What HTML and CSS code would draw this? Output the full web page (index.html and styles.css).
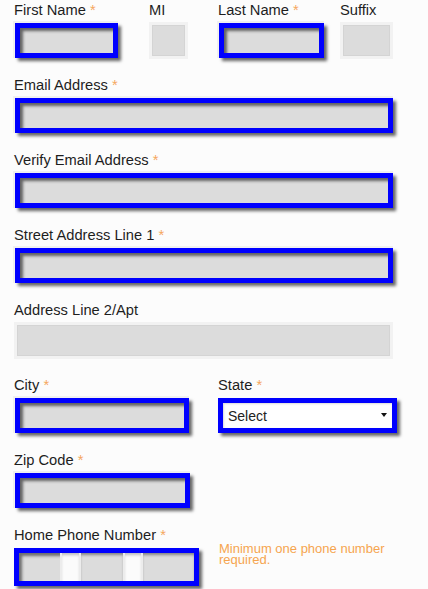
FILE: index.html
```html
<!DOCTYPE html>
<html>
	<head>
		<meta charset="UTF-8">
		<title>Contact Information</title>
		<link rel="stylesheet" href="styles.css">
	</head>
	<body>
		<form class="form">
			<div class="row">
				<div class="field f-first">
					<label>First Name <span class="req">*</span></label>
					<input type="text" class="box required">
				</div>
				<div class="field f-mi">
					<label>MI</label>
					<input type="text" class="box">
				</div>
				<div class="field f-last">
					<label>Last Name <span class="req">*</span></label>
					<input type="text" class="box required">
				</div>
				<div class="field f-suffix">
					<label>Suffix</label>
					<input type="text" class="box">
				</div>
			</div>
			<div class="field">
				<label>Email Address <span class="req">*</span></label>
				<input type="text" class="box required wide">
			</div>
			<div class="field">
				<label>Verify Email Address <span class="req">*</span></label>
				<input type="text" class="box required wide">
			</div>
			<div class="field">
				<label>Street Address Line 1 <span class="req">*</span></label>
				<input type="text" class="box required wide">
			</div>
			<div class="field">
				<label>Address Line 2/Apt</label>
				<input type="text" class="box full">
			</div>
			<div class="row">
				<div class="field f-city">
					<label>City <span class="req">*</span></label>
					<input type="text" class="box required">
				</div>
				<div class="field f-state">
					<label>State <span class="req">*</span></label>
					<div class="select">
						<select>
							<option>Select</option>
						</select>
					</div>
				</div>
			</div>
			<div class="field f-zip">
				<label>Zip Code <span class="req">*</span></label>
				<input type="text" class="box required">
			</div>
			<div class="row">
				<div class="field f-phone">
					<label>Home Phone Number <span class="req">*</span></label>
					<div class="phone">
						<input type="text" class="seg seg-area">
						<span class="sep"></span>
						<input type="text" class="seg seg-pre">
						<span class="sep"></span>
						<input type="text" class="seg seg-line">
					</div>
				</div>
				<p class="note">Minimum one phone number required.</p>
			</div>
		</form>
	</body>
</html>
```

FILE: styles.css
```css
body{
	margin: 0;
	background: #fcfcfc;
	font-family: "Liberation Sans", Arial, sans-serif;
	color: #1e1e1e;
}
.form{
	padding: 2px 14px 0;
}
.row{
	display: flex;
	align-items: flex-start;
}
.field{
	padding-bottom: 18px;
}
.field label{
	display: block;
	font-size: 14.7px;
	line-height: 17px;
	margin-bottom: 3px;
}
.req{
	color: #f5a75e;
}

/* inputs */
.box{
	display: block;
	box-sizing: border-box;
	height: 37px;
	margin: 0;
	padding: 0 6px;
	border: 3px solid #f2f2f2;
	background: #dcdcdc;
	box-shadow: inset 0 0 0 1px #d4d4d4;
	font: inherit;
	outline: none;
}
.box.required{
	height: 35px;
	margin: 4px 0 1px 1px;
	border: 5px solid #0000ff;
	box-shadow: -1px -1px 0 1px #f0f0f0, 3px 3px 3px rgba(0,0,0,.6), inset 3px 3px 3px rgba(0,0,0,.55);
}
.wide{
	width: 378px;
}
.full{
	width: 379px;
}

/* first row */
.f-first{
	width: 135px;
}
.f-first .box{
	width: 103px;
}
.f-mi{
	width: 69px;
}
.f-mi .box{
	width: 39px;
}
.f-last{
	width: 122px;
}
.f-last .box{
	width: 105px;
}
.f-suffix{
	width: 53px;
}
.f-suffix .box{
	width: 53px;
}

/* city / state */
.f-city{
	width: 204px;
}
.f-city .box{
	width: 174px;
}
.f-state{
	width: 180px;
}
.select{
	position: relative;
	margin: 4px 0 1px;
	width: 179px;
}
.select select{
	display: block;
	box-sizing: border-box;
	width: 100%;
	height: 35px;
	margin: 0;
	padding: 0 5px;
	border: 5px solid #0000ff;
	border-radius: 0;
	background: #fff;
	box-shadow: 3px 3px 3px rgba(0,0,0,.6), inset 1px 1px 2px rgba(0,0,0,.15);
	font-family: "Liberation Sans", Arial, sans-serif;
	font-size: 14px;
	color: #222;
	-webkit-appearance: none;
	appearance: none;
	outline: none;
}
.select:after{
	content: "";
	position: absolute;
	right: 10px;
	top: 15px;
	border-left: 3px solid transparent;
	border-right: 3px solid transparent;
	border-top: 4px solid #111;
}

/* zip */
.f-zip .box{
	width: 175px;
}

/* phone */
.f-phone{
	width: 205px;
}
.phone{
	display: flex;
	box-sizing: border-box;
	width: 185px;
	height: 38px;
	margin-top: 4px;
	border: 5px solid #0000ff;
	box-shadow: 3px 3px 3px rgba(0,0,0,.6);
}
.seg{
	box-sizing: border-box;
	height: 100%;
	margin: 0;
	padding: 0;
	border: 0;
	background: #dcdcdc;
	box-shadow: inset 0 3px 3px -1px rgba(0,0,0,.4);
	outline: none;
}
.seg-area{
	width: 41px;
	box-shadow: inset 3px 3px 3px rgba(0,0,0,.5);
}
.seg-pre{
	width: 42px;
}
.seg-line{
	width: 51px;
}
.sep{
	box-sizing: border-box;
	width: 21px;
	height: 100%;
	background: #fbfbfb;
	border-left: 2px solid #ececec;
	border-right: 2px solid #ececec;
	box-shadow: inset 0 3px 3px -1px rgba(0,0,0,.25);
}
.note{
	width: 190px;
	margin: 0;
	padding-top: 16px;
	font-size: 13px;
	line-height: 11px;
	color: #f6a54f;
}
```
